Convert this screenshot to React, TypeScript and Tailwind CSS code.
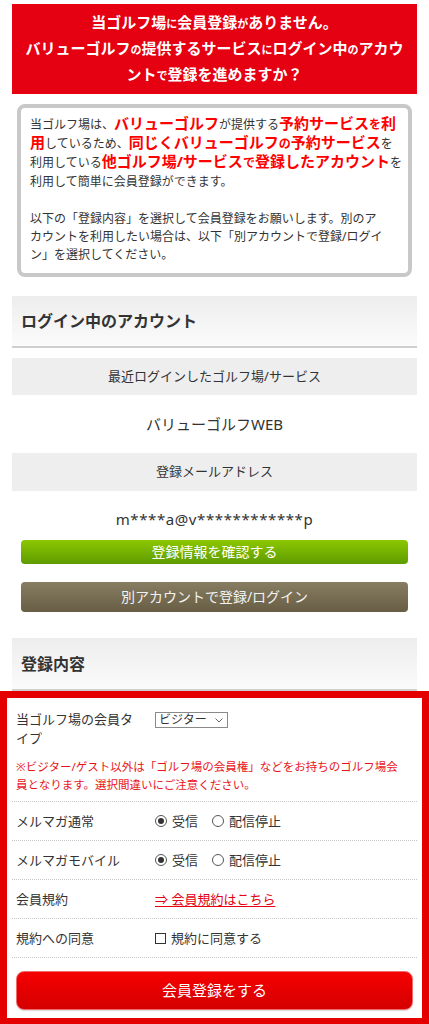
import React from 'react';

const Radio = ({ checked, label }: { checked?: boolean; label: string }) => (
  <label className="flex items-center">
    <span className="flex items-center justify-center w-[12px] h-[12px] rounded-full border border-[#555] bg-white">
      {checked && <span className="w-[6px] h-[6px] rounded-full bg-[#333]" />}
    </span>
    <span className="ml-[5px]">{label}</span>
  </label>
);

const FormRow = ({ label, children }: { label: string; children: React.ReactNode }) => (
  <div className="flex items-center py-[10px] leading-[18px] border-b border-dotted border-[#c8c8c8]">
    <div className="w-[143px] pl-[4px] pr-[12px] shrink-0">{label}</div>
    <div className="flex items-center">{children}</div>
  </div>
);

// red emphasised words inside the notice box
const Em = ({ children }: { children: React.ReactNode }) => (
  <b className="text-[15px] leading-[12px] text-[#ff0000]">{children}</b>
);

const App: React.FC = () => {
  return (
    <div className="w-[429px] bg-white text-[#333] font-['Noto_Sans','Noto_Sans_CJK_JP',sans-serif]">
      <div className="px-[12px] pt-[4px]">
        {/* banner */}
        <div className="bg-[#e50012] text-white font-bold text-center text-[15px] leading-[25px] py-[6px] whitespace-nowrap">
          当ゴルフ場<span className="text-[11px]">に</span>会員登録<span className="text-[11px]">が</span>ありません。
          <br />
          バリューゴルフ<span className="text-[11px]">の</span>提供するサービス<span className="text-[11px]">に</span>ログイン中<span className="text-[11px]">の</span>アカウ
          <br />
          ント<span className="text-[11px]">で</span>登録を進めますか？
        </div>

        {/* notice box */}
        <div className="mx-[5px] mt-[10px] border-4 border-[#c8c8c8] rounded-[8px] pl-[9px] pr-[5px] pt-[7px] pb-[9px] text-[12px] whitespace-nowrap">
          <p className="leading-[19px]">
            当ゴルフ場は、<Em>バリューゴルフ</Em>が提供する
            <Em>予約サービス<span className="text-[12px]">を</span>利</Em>
            <br />
            <Em>用</Em>しているため、
            <Em>同じくバリューゴルフ<span className="text-[12px]">の</span>予約サービス</Em>を
            <br />
            利用している<Em>他ゴルフ場/サービス<span className="text-[12px]">で</span>登録したアカウント</Em>を
            <br />
            利用して簡単に会員登録ができます。
          </p>
          <p className="leading-[18px] mt-[19px]">
            以下の「登録内容」を選択して会員登録をお願いします。別のア
            <br />
            カウントを利用したい場合は、以下「別アカウントで登録/ログイ
            <br />
            ン」を選択してください。
          </p>
        </div>

        {/* logged in account */}
        <div className="mt-[19px] h-[52px] flex items-center pl-[9px] bg-gradient-to-b from-[#ededed] to-[#fbfbfb] border-b-2 border-[#cfcfcf]">
          <h2 className="text-[16px] font-bold">ログイン中のアカウント</h2>
        </div>

        <div className="mt-[10px] h-[37px] bg-[#eeeeee] flex items-center justify-center text-[13px]">
          最近ログインしたゴルフ場/サービス
        </div>
        <div className="h-[58px] flex items-center justify-center text-[15px]">バリューゴルフWEB</div>
        <div className="h-[38px] bg-[#eeeeee] flex items-center justify-center text-[13px]">
          登録メールアドレス
        </div>
        <div className="pt-[18px] leading-[20px] text-[15px] text-center tracking-[0.04em]">
          m****a@v************p
        </div>

        <div className="mx-[9px] mt-[11px] flex flex-col">
          <button className="h-[24px] rounded-[4px] bg-gradient-to-b from-[#8cc700] to-[#5e9c00] text-white text-[14px] leading-[24px]">
            登録情報を確認する
          </button>
          <button className="mt-[18px] h-[30px] rounded-[4px] bg-gradient-to-b from-[#877d62] to-[#685e45] text-[#f2f2f2] text-[14px] leading-[30px]">
            別アカウントで登録/ログイン
          </button>
        </div>

        <div className="mt-[26px] h-[53px] flex items-center pl-[9px] bg-gradient-to-b from-[#ededed] to-[#fbfbfb] border-b-2 border-[#cfcfcf]">
          <h2 className="text-[16px] font-bold">登録内容</h2>
        </div>
      </div>

      {/* registration form */}
      <div className="border-[7px] border-[#e50000] px-[5px] text-[13px]">
        <div className="pt-[12px] pb-[7px] border-b border-dotted border-[#c8c8c8]">
          <div className="flex items-start">
            <div className="w-[143px] pl-[4px] pr-[12px] shrink-0 leading-[19px]">当ゴルフ場の会員タイプ</div>
            <div className="mt-[2px] h-[16px] w-[73px] border border-[#8a8a8a] flex items-center justify-between pl-[3px] pr-[4px] text-[12px] leading-[14px]">
              <span>ビジター</span>
              <svg width="8" height="5" viewBox="0 0 8 5" fill="none">
                <path d="M0.5 0.5 L4 4 L7.5 0.5" stroke="#666" strokeWidth="1" />
              </svg>
            </div>
          </div>
          <p className="mt-[10px] pl-[4px] text-[11.5px] leading-[18px] text-[#e8141c] whitespace-nowrap">
            ※ビジター/ゲスト以外は「ゴルフ場の会員権」などをお持ちのゴルフ場会
            <br />
            員となります。選択間違いにご注意ください。
          </p>
        </div>

        <FormRow label="メルマガ通常">
          <Radio checked label="受信" />
          <span className="ml-[14px]">
            <Radio label="配信停止" />
          </span>
        </FormRow>
        <FormRow label="メルマガモバイル">
          <Radio checked label="受信" />
          <span className="ml-[14px]">
            <Radio label="配信停止" />
          </span>
        </FormRow>
        <FormRow label="会員規約">
          <a className="text-[#e50012] underline underline-offset-2">⇒ 会員規約はこちら</a>
        </FormRow>
        <FormRow label="規約への同意">
          <label className="flex items-center">
            <span className="w-[11px] h-[11px] border border-[#333] bg-white" />
            <span className="ml-[5px]">規約に同意する</span>
          </label>
        </FormRow>

        <div className="mx-[4px] mt-[13px] mb-[8px]">
          <button className="w-full h-[39px] rounded-[8px] bg-gradient-to-b from-[#f60000] to-[#d40000] border border-[#f26a6a] text-white text-[15px] shadow-[0_1px_1px_rgba(0,0,0,0.15)]">
            会員登録をする
          </button>
        </div>
      </div>
    </div>
  );
};

export default App;
